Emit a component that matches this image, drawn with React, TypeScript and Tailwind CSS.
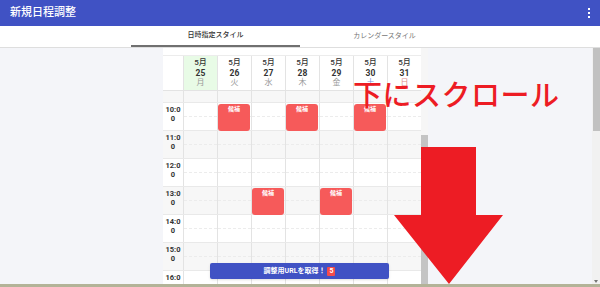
import React from "react";

const days = [
  { m: "5月", d: "25", w: "月", wc: "text-[#999]", today: true },
  { m: "5月", d: "26", w: "火", wc: "text-[#999]" },
  { m: "5月", d: "27", w: "水", wc: "text-[#999]" },
  { m: "5月", d: "28", w: "木", wc: "text-[#999]" },
  { m: "5月", d: "29", w: "金", wc: "text-[#999]" },
  { m: "5月", d: "30", w: "土", wc: "text-[#7a8fd8]" },
  { m: "5月", d: "31", w: "日", wc: "text-[#e08a8a]" },
];

// hour -> day columns holding a candidate
const events: Record<number, number[]> = { 10: [1, 3, 5], 13: [2, 4] };
const hours = [10, 11, 12, 13, 14, 15, 16];

function HourRow({ h }: { h: number }) {
  const shade = h % 2 === 1 ? "bg-[#f7f7f7]" : "bg-white";
  return (
    <div className={`grid grid-cols-[20px_repeat(7,34px)] h-[28px] border-b border-[#e9e9e9] ${shade}`}>
      <div className="pt-[2px] text-center text-[7.5px] leading-[9px] font-bold text-[#333] break-all px-[1px]">
        {h}:0
        <br />0
      </div>
      {days.map((_, i) => (
        <div key={i} className="relative border-l border-[#e3e3e3] flex flex-col">
          <div className="h-[14px] border-b border-dashed border-[#ececec]" />
          <div className="flex-1" />
          {events[h]?.includes(i) && (
            <div className="absolute top-[1px] left-0 right-[1px] h-[27px] rounded-[3px] bg-[#f65a5a] text-center text-[6px] leading-[9px] font-bold text-white">
              候補
            </div>
          )}
        </div>
      ))}
    </div>
  );
}

export default function App() {
  return (
    <div className="relative w-[600px] h-[287px] overflow-hidden flex flex-col font-['Roboto','Noto_Sans_CJK_JP',sans-serif] bg-[#f4f5f9]">
      <header className="h-[26px] shrink-0 bg-[#4052c4] flex items-center justify-between pl-[10px] pr-[10px]">
        <span className="text-white text-[11px] font-medium">新規日程調整</span>
        <div className="flex flex-col gap-[2px]">
          <span className="w-[2px] h-[2px] bg-white" />
          <span className="w-[2px] h-[2px] bg-white" />
          <span className="w-[2px] h-[2px] bg-white" />
        </div>
      </header>

      <nav className="h-[22px] shrink-0 bg-white flex justify-center border-b border-[#dedede]">
        <div className="w-[169px] flex items-center justify-center border-b-2 border-[#707070] text-[7px] font-medium text-[#333]">
          日時指定スタイル
        </div>
        <div className="w-[169px] flex items-center justify-center text-[7px] text-[#777]">
          カレンダースタイル
        </div>
      </nav>

      <div className="flex-1 flex min-h-0">
        <div className="w-[163px]" />
        <div className="relative w-[258px] bg-white overflow-hidden">
          <div className="h-[8px] border-b border-[#ececec]" />
          <div className="grid grid-cols-[20px_repeat(7,34px)] h-[35px] border-b border-[#e3e3e3]">
            <div />
            {days.map((d) => (
              <div
                key={d.d}
                className={`border-l border-[#e3e3e3] flex flex-col items-center justify-center text-[8px] leading-[10px] text-[#333] ${d.today ? "bg-[#e8fbe6]" : ""}`}
              >
                <span className="font-medium">{d.m}</span>
                <span className="font-bold text-[8.5px]">{d.d}</span>
                <span className={d.wc}>{d.w}</span>
              </div>
            ))}
          </div>
          <div className="grid grid-cols-[20px_repeat(7,34px)] h-[12px] bg-[#f7f7f7] border-b border-[#e9e9e9]">
            <div />
            {days.map((d) => (
              <div key={d.d} className="border-l border-[#e3e3e3]" />
            ))}
          </div>
          {hours.map((h) => (
            <HourRow key={h} h={h} />
          ))}

          <button className="absolute left-[47px] top-[215px] w-[179px] h-[16px] rounded-[2px] bg-[#4052c4] shadow-sm flex items-center justify-center gap-[2px] text-white text-[7px] font-bold">
            調整用URLを取得！
            <span className="w-[8px] h-[9px] bg-[#f44b4b] rounded-[1px] flex items-center justify-center text-[7px]">
              5
            </span>
          </button>
        </div>
        <div className="w-[7px] flex flex-col">
          <div className="h-[87px] bg-[#f6f6f6]" />
          <div className="flex-1 bg-[#c4c4c4]" />
        </div>
        <div className="flex-1" />
        <div className="w-[8px] bg-[#f1f1f1] flex flex-col justify-between">
          <div className="h-[83px] ml-[1px] bg-[#c1c1c1]" />
          <div className="mx-auto mb-[1px] w-0 h-0 border-l-[2px] border-r-[2px] border-t-[3px] border-l-transparent border-r-transparent border-t-[#777]" />
        </div>
      </div>
      <div className="h-[3px] shrink-0 bg-[#b3b398]" />

      <div className="absolute left-[353px] top-[79px] text-[29px] leading-none font-medium text-[#ed1c24] font-['Noto_Sans_CJK_JP',sans-serif] tracking-[0.5px]">
        下にスクロール
      </div>
      <svg className="absolute left-0 top-0" width="600" height="287" viewBox="0 0 600 287">
        <polygon
          points="421,147 476,147 476,215 503,215 449,284 394,215 421,215"
          fill="#ed1c24"
        />
      </svg>
    </div>
  );
}
